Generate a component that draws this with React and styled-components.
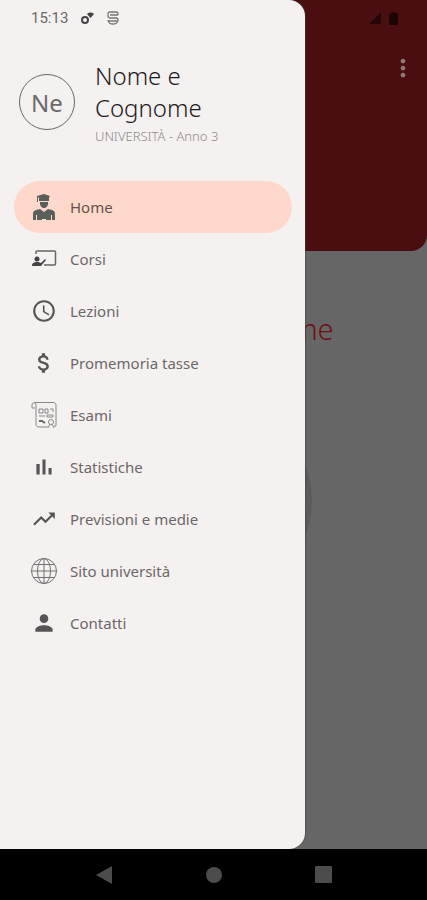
import React from "react";
import styled, { createGlobalStyle } from "styled-components";
import { MdAccessTime, MdAttachMoney, MdMoreVert, MdPerson, MdTrendingUp } from "react-icons/md";

const GlobalStyle = createGlobalStyle`
    * {
        box-sizing: border-box;
    }

    body {
        margin: 0;
        background-color: #000;
        font-family: "Noto Sans", "Open Sans", sans-serif;
    }
`;

const Screen = styled.div`
    display: flex;
    flex-direction: column;
    min-height: 100vh;
`;

const Stage = styled.div`
    position: relative;
    flex: 1;
    overflow: hidden;
    background-color: #666;
`;

const Hero = styled.header`
    display: flex;
    flex-direction: column;
    align-items: flex-end;
    height: 251px;
    border-radius: 0 0 16px 16px;
    background-color: #4a0e10;
`;

const HeroStatus = styled.div`
    display: flex;
    align-items: center;
    gap: 8px;
    height: 36px;
    padding-right: 29px;
`;

const MoreButton = styled.button`
    display: flex;
    align-items: center;
    justify-content: center;
    width: 48px;
    height: 64px;
    padding: 0;
    border: 0;
    background: none;
    color: #8e7878;
`;

const Main = styled.main`
    display: flex;
    flex-direction: column;
    align-items: center;
    gap: 56px;
    padding-top: 60px;
`;

const Greeting = styled.h1`
    margin: 0;
    color: #6e1014;
    font-size: 29px;
    font-weight: 300;
    line-height: 36px;
    white-space: nowrap;
`;

const Disc = styled.div`
    width: 196px;
    height: 196px;
    border-radius: 50%;
    background-color: #5b5b5b;
`;

const Drawer = styled.aside`
    position: absolute;
    top: 0;
    bottom: 0;
    left: 0;
    width: 72%;
    max-width: 305px;
    border-radius: 0 16px 16px 0;
    background-color: #f6f1f1;
    color: #5b5757;
    box-shadow: 1px 0 1px #4448;
`;

const StatusBar = styled.div`
    display: flex;
    align-items: center;
    gap: 12px;
    height: 36px;
    padding-left: 31px;
    color: #6a6767;
    font-family: Roboto, sans-serif;
    font-size: 15px;
`;

const Profile = styled.div`
    display: flex;
    align-items: flex-start;
    gap: 20px;
    padding: 24px 19px 32px;
`;

const Avatar = styled.div`
    display: flex;
    align-items: center;
    justify-content: center;
    flex: none;
    width: 56px;
    height: 56px;
    margin-top: 14px;
    border: 1px solid #666;
    border-radius: 50%;
    color: #6a6a6a;
    font-size: 24px;
`;

const Name = styled.h2`
    margin: 0;
    color: #1c1a20;
    font-size: 24px;
    font-weight: 300;
    line-height: 32px;
`;

const Course = styled.p`
    margin: 0;
    color: #8c8888;
    font-size: 13px;
    font-weight: 300;
    line-height: 25px;
`;

const Menu = styled.nav`
    display: flex;
    flex-direction: column;
    padding: 0 13px 0 14px;
`;

const MenuLink = styled.a`
    display: flex;
    align-items: center;
    gap: 12px;
    height: 52px;
    padding-left: 16px;
    border-radius: 26px;
    background-color: ${props => (props.$active ? "#ffd8cc" : "transparent")};
    color: ${props => (props.$active ? "#6a504a" : "#6b6767")};
    font-size: 15px;
    text-decoration: none;
`;

const IconSlot = styled.span`
    display: flex;
    align-items: center;
    justify-content: center;
    width: 28px;
    height: 28px;
    color: #555;
`;

const NavBar = styled.footer`
    display: flex;
    align-items: center;
    justify-content: center;
    gap: 62px;
    height: 51px;
    background-color: #000;
`;

const NavButton = styled.button`
    display: flex;
    align-items: center;
    justify-content: center;
    width: 48px;
    height: 48px;
    padding: 0;
    border: 0;
    background: none;
    color: #4c4c4c;
`;

const GraduateIcon = () => (
    <svg width="28" height="28" viewBox="0 0 28 28" fill="#59605c">
        <path d="M14 1l6 2-1 1.500V8H9V4.500l-1-.2V9H7V3z" />
        <path d="M10 9h8c.5 3.500-1.500 6-4 6s-4.500-2.500-4-6z" />
        <path d="M3 27v-6c0-3 2-4 7-5l4 3 4-3c5 1 7 2 7 5v6h-3v-5h-1v5h-5v-5l-2-2-2 2v5H7v-5H6v5z" />
        <path d="M12 19h4v7h-4z" />
    </svg>
);

const TeacherIcon = () => (
    <svg width="26" height="26" viewBox="0 0 26 26" fill="none" stroke="#666">
        <path d="M5 8V6q0-1 1-1h17.500q1 0 1 1v12q0 1-1 1H13" strokeWidth="1.500" />
        <circle cx="6" cy="13" r="2.500" fill="#444" stroke="none" />
        <path d="M1 20c0-3 2-4 5-4 2 0 3 .5 4 1l4-4 1 1-5 6z" fill="#444" stroke="none" />
    </svg>
);

const DiplomaIcon = () => (
    <svg width="28" height="28" viewBox="0 0 28 28" fill="none" stroke="#888">
        <path d="M5 7H2V4c0-3 4-3 4 0v19c0 2 1 3 3 3h9M4 1.500h19c2 0 3 1 3 3V25h-2" />
        <path d="M9 8h4v4H9zM15 8h3v4h-3zM20 8h3v3M9 15h6M17 14h6v2h-6z" />
        <path d="M9 20h3l3 2" stroke="#666" strokeWidth="2" />
        <circle cx="21" cy="21" r="2.500" />
        <path d="M20 23l-2 4M22 23l2 4" />
    </svg>
);

const BarsIcon = () => (
    <svg width="26" height="26" viewBox="0 0 24 24" fill="currentColor">
        <path d="M5 9.200h3V19H5zM10.600 5h2.800v14h-2.800zM16.200 13H19v6h-2.800z" />
    </svg>
);

const GlobeIcon = () => (
    <svg width="28" height="28" viewBox="0 0 28 28" fill="none" stroke="#707070">
        <circle cx="14" cy="14" r="12.500" />
        <ellipse cx="14" cy="14" rx="6.500" ry="12.500" />
        <path d="M14 1.500v25M1.500 14h25M4 7.500h20M4 20.500h20" />
    </svg>
);

const items = [
    { label: "Home", icon: <GraduateIcon />, active: true },
    { label: "Corsi", icon: <TeacherIcon /> },
    { label: "Lezioni", icon: <MdAccessTime size={26} /> },
    { label: "Promemoria tasse", icon: <MdAttachMoney size={26} /> },
    { label: "Esami", icon: <DiplomaIcon /> },
    { label: "Statistiche", icon: <BarsIcon /> },
    { label: "Previsioni e medie", icon: <MdTrendingUp size={26} /> },
    { label: "Sito università", icon: <GlobeIcon /> },
    { label: "Contatti", icon: <MdPerson size={26} /> }
];

const App = () => (
    <>
        <GlobalStyle />
        <Screen>
            <Stage>
                <Hero>
                    <HeroStatus>
                        <svg width="12" height="12" viewBox="0 0 12 12" fill="#250607">
                            <path d="M12 0v12H0z" />
                        </svg>
                        <svg width="9" height="13" viewBox="0 0 9 13" fill="#1c0304">
                            <path d="M2 1h1V0h3v1h2l1 1v10l-1 1H1l-1-1V2z" />
                        </svg>
                    </HeroStatus>
                    <MoreButton aria-label="Altro">
                        <MdMoreVert size={28} />
                    </MoreButton>
                </Hero>
                <Main>
                    <Greeting>Nome e Cognome</Greeting>
                    <Disc />
                </Main>
                <Drawer>
                    <StatusBar>
                        <span>15:13</span>
                        <svg width="15" height="14" viewBox="0 0 15 14" fill="none" stroke="#444">
                            <circle cx="5" cy="9" r="3" strokeWidth="2" />
                            <path d="M7 3c2-2 5-2 7 0l-3.500 4z" fill="#444" stroke="none" />
                        </svg>
                        <svg width="12" height="14" viewBox="0 0 12 14" fill="none" stroke="#777" strokeWidth="1.300">
                            <path d="M11 4V3q0-2-2-2H3Q1 1 1 3v1.500Q1 7 3 7h6q2 0 2 2c0 3-3 4-5 4s-5-1-5-4M3 4h8M1 10h9" />
                        </svg>
                    </StatusBar>
                    <Profile>
                        <Avatar>Ne</Avatar>
                        <div>
                            <Name>Nome e Cognome</Name>
                            <Course>UNIVERSITÀ - Anno 3</Course>
                        </div>
                    </Profile>
                    <Menu>
                        {items.map(({ label, icon, active }) => (
                            <MenuLink key={label} href="#" $active={active}>
                                <IconSlot>{icon}</IconSlot>
                                {label}
                            </MenuLink>
                        ))}
                    </Menu>
                </Drawer>
            </Stage>
            <NavBar>
                <NavButton aria-label="Indietro">
                    <svg width="16" height="18" viewBox="0 0 16 18" fill="currentColor">
                        <path d="M16 0v18L0 9z" />
                    </svg>
                </NavButton>
                <NavButton aria-label="Schermata principale">
                    <svg width="16" height="16" viewBox="0 0 16 16" fill="currentColor">
                        <circle cx="8" cy="8" r="8" />
                    </svg>
                </NavButton>
                <NavButton aria-label="App recenti">
                    <svg width="17" height="17" viewBox="0 0 17 17" fill="currentColor">
                        <rect width="17" height="17" rx="1" />
                    </svg>
                </NavButton>
            </NavBar>
        </Screen>
    </>
);

export default App;
